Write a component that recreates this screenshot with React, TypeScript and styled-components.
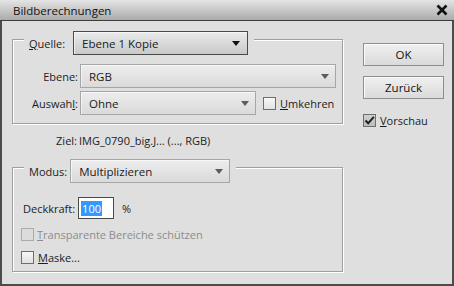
import React from "react";
import styled, { createGlobalStyle } from "styled-components";

const Global = createGlobalStyle`
  html, body { margin: 0; padding: 0; background: #dfdfdf; }
  body { font-family: "Open Sans", "Noto Sans", sans-serif; font-size: 11px; color: #1c1c1c; }
  * { box-sizing: border-box; }
`;

const Window = styled.div`
  width: 454px;
  height: 286px;
  background: #dfdfdf;
  border: 2px solid #4c4c4c;
  border-top: none;
  display: flex;
  flex-direction: column;
`;

const TitleBar = styled.div`
  height: 21px;
  margin: 0 -2px;
  padding: 0 6px 0 13px;
  display: flex;
  align-items: center;
  justify-content: space-between;
  background: linear-gradient(#e4e4e4, #ababab);
  border-bottom: 1px solid #3c3c3c;
  font-size: 11.5px;
  color: #111;
`;

const Body = styled.div`
  flex: 1;
  display: flex;
  padding: 0 8px 0 10px;
`;

const LeftCol = styled.div`
  width: 332px;
  padding-top: 18px;
  display: flex;
  flex-direction: column;
`;

const RightCol = styled.div`
  margin-left: auto;
  width: 81px;
  padding-top: 22px;
  display: flex;
  flex-direction: column;
`;

const Group = styled.div<{ $h: number; $pt: number; $pl: number }>`
  position: relative;
  width: 331px;
  height: ${(p) => p.$h}px;
  border: 1px solid #a0a0a0;
  box-shadow: 1px 1px 0 #fff, inset 1px 1px 0 #fff;
  padding: ${(p) => p.$pt}px 0 0 ${(p) => p.$pl}px;
`;

const Legend = styled.div<{ $gap: number }>`
  position: absolute;
  top: -9px;
  left: 11px;
  padding: 0 6px 0 5px;
  background: #dfdfdf;
  display: flex;
  align-items: center;
  gap: ${(p) => p.$gap}px;
`;

const LegendLabel = styled.span`
  padding-left: 0;
`;

const FormGrid = styled.div`
  display: grid;
  grid-template-columns: 65px auto;
  column-gap: 2px;
  row-gap: 3px;
  align-items: center;
`;

const Label = styled.span`
  text-align: right;
  white-space: nowrap;
`;

const Row = styled.div`
  display: flex;
  align-items: center;
`;

const Select = styled.div<{ $w: number; $primary?: boolean }>`
  width: ${(p) => p.$w}px;
  height: 24px;
  padding: 0 ${(p) => (p.$primary ? 7 : 6)}px 0 8px;
  display: flex;
  align-items: center;
  justify-content: space-between;
  border: 1px solid ${(p) => (p.$primary ? "#4a4a4a" : "#a6a6a6")};
  background: ${(p) =>
    p.$primary
      ? "linear-gradient(#ebebeb, #c9c9c9)"
      : "linear-gradient(#ededed, #dadada)"};
  box-shadow: inset 1px 1px 0 rgba(255, 255, 255, 0.6);
  color: #1a1a1a;
  font-size: 11.5px;
  white-space: nowrap;
`;

const Arrow = styled.span<{ $dark?: boolean }>`
  width: 0;
  height: 0;
  border-left: 4.5px solid transparent;
  border-right: 4.5px solid transparent;
  border-top: 5px solid ${(p) => (p.$dark ? "#111" : "#5c5c5c")};
`;

const Check = styled.span<{ $checked?: boolean; $disabled?: boolean }>`
  width: 13px;
  height: 13px;
  flex: none;
  display: inline-flex;
  align-items: center;
  justify-content: center;
  border: 1px solid ${(p) => (p.$disabled ? "#ababab" : "#6e6e6e")};
  background: ${(p) =>
    p.$disabled
      ? "#dcdcdc"
      : p.$checked
      ? "linear-gradient(#d0d0d0, #bdbdbd)"
      : "linear-gradient(#f7f7f7, #e2e2e2)"};
`;

const CheckLabel = styled.label<{ $disabled?: boolean; $gap: number }>`
  display: flex;
  align-items: center;
  gap: ${(p) => p.$gap}px;
  color: ${(p) => (p.$disabled ? "#8c8c8c" : "#1c1c1c")};
  white-space: nowrap;
  font-size: 11px;
`;

const ZielRow = styled.div`
  margin-top: 9px;
  height: 16px;
`;

const Value = styled.span`
  white-space: nowrap;
`;

const Deck = styled.div`
  display: flex;
  align-items: center;
  padding-left: 2px;
`;

const Input = styled.div`
  width: 36px;
  height: 22px;
  margin-left: 3px;
  border: 1px solid #4a4a4a;
  background: #fff;
  display: flex;
  align-items: center;
  padding-left: 2px;
`;

const Selected = styled.span`
  background: #3399ff;
  color: #fff;
  padding: 0 1px;
  line-height: 15px;
`;

const Percent = styled.span`
  margin-left: 8px;
`;

const CheckList = styled.div`
  margin-top: 8px;
  display: flex;
  flex-direction: column;
  gap: 8px;
`;

const Button = styled.button`
  width: 81px;
  height: 23px;
  padding: 0;
  border: 1px solid #8e8e8e;
  background: linear-gradient(#f0f0f0, #dadada);
  box-shadow: inset 1px 1px 0 #fafafa;
  font-family: inherit;
  font-size: 11.5px;
  color: #111;
  & + & {
    margin-top: 10px;
  }
`;

const Preview = styled.div`
  margin-top: 14px;
`;

const CheckMark = () => (
  <svg width="11" height="11" viewBox="0 0 11 11">
    <path d="M1.5 5.5 L4.2 8.3 L9.8 1.8" fill="none" stroke="#1e1e1e" strokeWidth="2" />
  </svg>
);

const CloseIcon = () => (
  <svg width="12" height="12" viewBox="0 0 12 12">
    <path d="M1.5 1.5 L10.5 10.5 M10.5 1.5 L1.5 10.5" stroke="#111" strokeWidth="2.6" />
  </svg>
);

export default function App() {
  return (
    <>
      <Global />
      <Window>
        <TitleBar>
          <span>Bildberechnungen</span>
          <CloseIcon />
        </TitleBar>
        <Body>
          <LeftCol>
            <Group $h={85} $pt={24} $pl={0}>
              <Legend $gap={8}>
                <LegendLabel>
                  <u>Q</u>uelle:
                </LegendLabel>
                <Select $w={175} $primary>
                  <span>Ebene 1 Kopie</span>
                  <Arrow $dark />
                </Select>
              </Legend>
              <FormGrid>
                <Label>Ebene:</Label>
                <Select $w={256}>
                  <span>RGB</span>
                  <Arrow />
                </Select>
                <Label>
                  Auswah<u>l</u>:
                </Label>
                <Row>
                  <Select $w={176}>
                    <span>Ohne</span>
                    <Arrow />
                  </Select>
                  <CheckLabel $gap={4} style={{ marginLeft: 7 }}>
                    <Check />
                    <span>
                      <u>U</u>mkehren
                    </span>
                  </CheckLabel>
                </Row>
              </FormGrid>
            </Group>
            <ZielRow>
              <FormGrid>
                <Label>Ziel:</Label>
                <Value>IMG_0790_big.J... (..., RGB)</Value>
              </FormGrid>
            </ZielRow>
            <Group $h={105} $pt={29} $pl={8} style={{ marginTop: 18 }}>
              <Legend $gap={3}>
                <LegendLabel>Modus:</LegendLabel>
                <Select $w={160}>
                  <span>Multiplizieren</span>
                  <Arrow />
                </Select>
              </Legend>
              <Deck>
                <span>Deckkraft:</span>
                <Input>
                  <Selected>100</Selected>
                </Input>
                <Percent>%</Percent>
              </Deck>
              <CheckList>
                <CheckLabel $disabled $gap={3}>
                  <Check $disabled />
                  <span>
                    <u>T</u>ransparente Bereiche schützen
                  </span>
                </CheckLabel>
                <CheckLabel $gap={4}>
                  <Check />
                  <span>
                    <u>M</u>aske...
                  </span>
                </CheckLabel>
              </CheckList>
            </Group>
          </LeftCol>
          <RightCol>
            <Button>OK</Button>
            <Button>Zurück</Button>
            <Preview>
              <CheckLabel $gap={4}>
                <Check $checked>
                  <CheckMark />
                </Check>
                <span>
                  <u>V</u>orschau
                </span>
              </CheckLabel>
            </Preview>
          </RightCol>
        </Body>
      </Window>
    </>
  );
}
